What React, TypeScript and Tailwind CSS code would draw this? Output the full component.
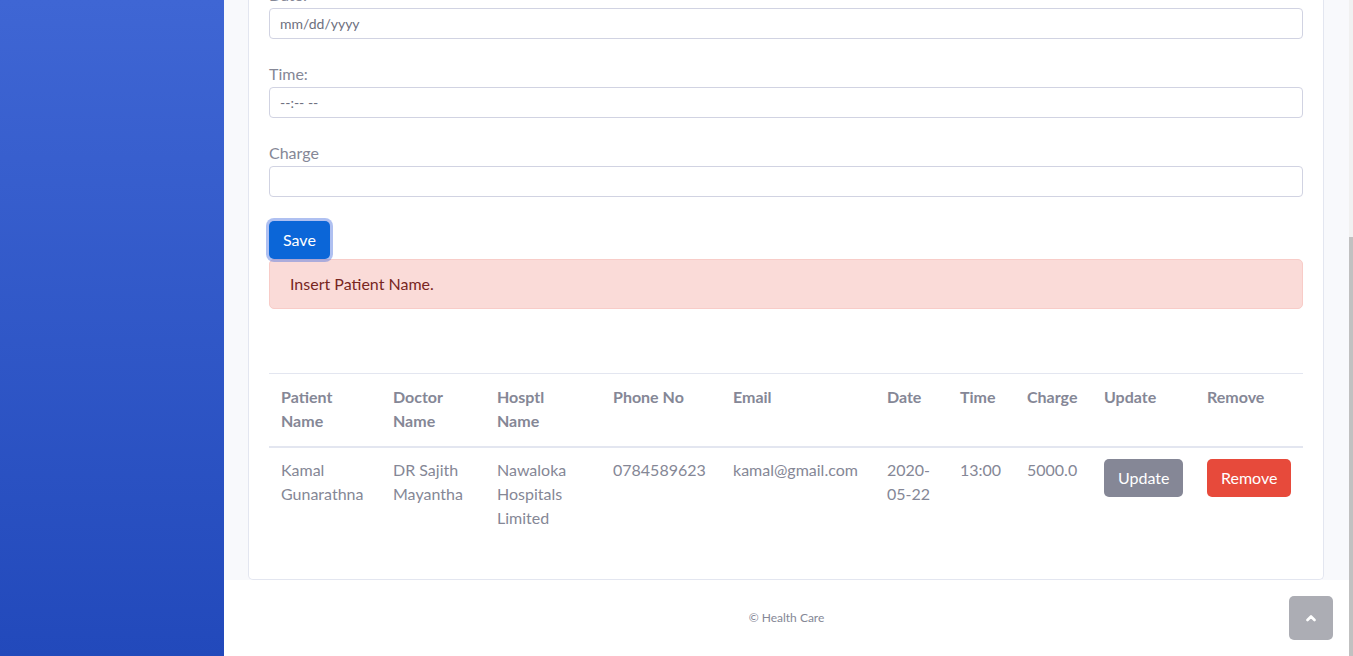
import React from 'react';

const font = { fontFamily: 'Lato, "Noto Sans", sans-serif' };

type Field = { label: string; placeholder: string };

const fields: Field[] = [
  { label: 'Date:', placeholder: 'mm/dd/yyyy' },
  { label: 'Time:', placeholder: '--:-- --' },
  { label: 'Charge', placeholder: '' },
];

const columns = [
  { title: ['Patient', 'Name'], w: 'w-[112px]' },
  { title: ['Doctor', 'Name'], w: 'w-[104px]' },
  { title: ['Hosptl', 'Name'], w: 'w-[116px]' },
  { title: ['Phone No'], w: 'w-[120px]' },
  { title: ['Email'], w: 'w-[154px]' },
  { title: ['Date'], w: 'w-[73px]' },
  { title: ['Time'], w: 'w-[67px]' },
  { title: ['Charge'], w: 'w-[77px]' },
  { title: ['Update'], w: 'w-[103px]' },
  { title: ['Remove'], w: 'w-[108px]' },
];

const row = [
  ['Kamal', 'Gunarathna'],
  ['DR Sajith', 'Mayantha'],
  ['Nawaloka', 'Hospitals', 'Limited'],
  ['0784589623'],
  ['kamal@gmail.com'],
  ['2020-', '05-22'],
  ['13:00'],
  ['5000.0'],
];

const Lines = ({ lines }: { lines: string[] }) => (
  <>
    {lines.map((l) => (
      <span key={l} className="block">
        {l}
      </span>
    ))}
  </>
);

const App = () => {
  return (
    <div className="relative flex h-[656px] w-[1353px] overflow-hidden text-[16px] leading-6 text-[#858796]" style={font}>
      {/* sidebar */}
      <div className="w-[224px] shrink-0 bg-gradient-to-b from-[#3f66d4] to-[#2249bb]" />

      {/* main */}
      <div className="flex min-w-0 flex-1 flex-col">
        <div className="flex flex-1 flex-col justify-end overflow-hidden bg-[#f8f9fc] pl-[24px] pr-[25px]">
          <div className="rounded-b-[5px] border-x border-b border-[#e3e6f0] bg-white px-[20px] pb-[20px]">
            {fields.map((f) => (
              <div key={f.label} className="mb-[23px]">
                <label className="mb-px block h-6">{f.label}</label>
                <input
                  readOnly
                  placeholder={f.placeholder}
                  className="block h-[31px] w-full rounded-[4px] border border-[#d1d3e2] bg-white pl-[10px] text-[14px] outline-none placeholder:text-[#6e707e]"
                />
              </div>
            ))}
            <div className="mt-[24px]">
              <button className="h-[38px] rounded-[5px] bg-[#0b66d8] px-[14px] text-white shadow-[0_0_0_3px_rgba(78,115,223,0.45)]">
                Save
              </button>
            </div>
            <div className="rounded-[5px] border border-[#f8ccc8] bg-[#fadbd8] px-[20px] py-[12px] text-[#78261f]">
              Insert Patient Name.
            </div>

            <table className="mb-[15px] mt-[64px] w-full table-fixed border-collapse text-left">
              <colgroup>
                {columns.map((c) => (
                  <col key={c.title.join()} className={c.w} />
                ))}
              </colgroup>
              <thead>
                <tr>
                  {columns.map((c) => (
                    <th
                      key={c.title.join()}
                      className="border-t border-b-2 border-[#e3e6f0] px-[12px] pb-[13px] pt-[11px] align-top font-bold"
                    >
                      <Lines lines={c.title} />
                    </th>
                  ))}
                </tr>
              </thead>
              <tbody>
                <tr>
                  {row.map((cell) => (
                    <td key={cell.join()} className="border-t border-[#e3e6f0] px-[12px] pb-[14px] pt-[10px] align-top">
                      <Lines lines={cell} />
                    </td>
                  ))}
                  <td className="border-t border-[#e3e6f0] px-[12px] pt-[11px] align-top">
                    <button className="h-[38px] rounded-[5px] bg-[#858796] px-[14px] text-white">Update</button>
                  </td>
                  <td className="border-t border-[#e3e6f0] px-[12px] pt-[11px] align-top">
                    <button className="h-[38px] rounded-[5px] bg-[#e74a3b] px-[14px] text-white">Remove</button>
                  </td>
                </tr>
              </tbody>
            </table>
          </div>
        </div>
        <footer className="h-[76px] shrink-0 bg-white pt-[29px] text-center text-[12px] leading-[18px]">
          © Health Care
        </footer>
      </div>

      {/* scrollbar */}
      <div className="flex w-[4px] shrink-0 flex-col bg-[#f1f1f1]">
        <div className="h-[237px]" />
        <div className="flex-1 bg-[#c1c1c1]" />
      </div>

      {/* scroll to top */}
      <button className="absolute bottom-[16px] right-[20px] flex h-[44px] w-[44px] items-center justify-center rounded-[5px] bg-[#acadb4]">
        <svg width="10" height="8" viewBox="0 0 10 8">
          <path d="M1.5 6 L5 2.5 L8.5 6" fill="none" stroke="white" strokeWidth="2.6" strokeLinecap="round" strokeLinejoin="round" />
        </svg>
      </button>
    </div>
  );
};

export default App;
